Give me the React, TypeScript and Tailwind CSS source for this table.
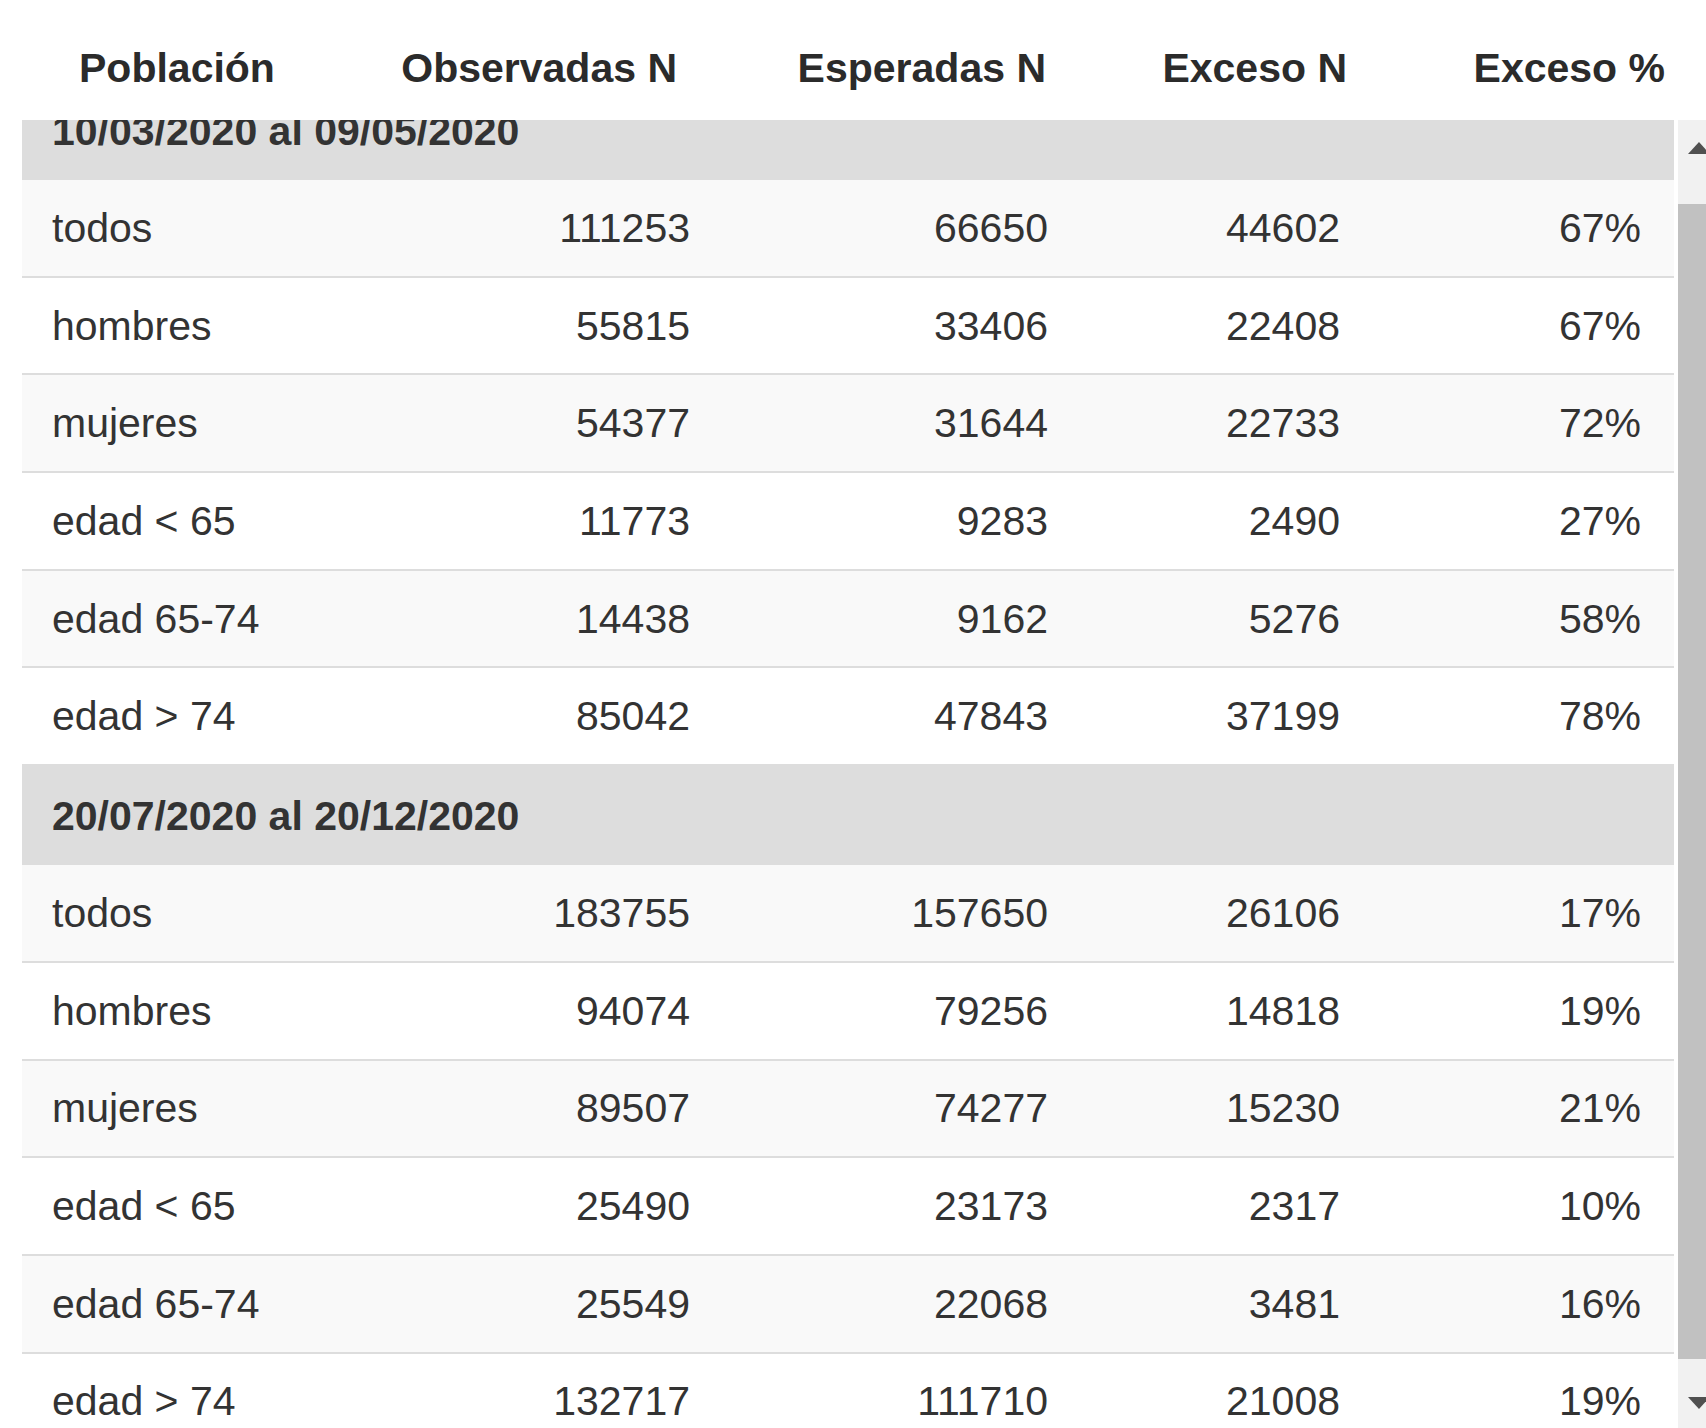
import React from "react";

type Row = [string, string, string, string, string];

const groups: { label: string; rows: Row[] }[] = [
  {
    label: "10/03/2020 al 09/05/2020",
    rows: [
      ["todos", "111253", "66650", "44602", "67%"],
      ["hombres", "55815", "33406", "22408", "67%"],
      ["mujeres", "54377", "31644", "22733", "72%"],
      ["edad < 65", "11773", "9283", "2490", "27%"],
      ["edad 65-74", "14438", "9162", "5276", "58%"],
      ["edad > 74", "85042", "47843", "37199", "78%"],
    ],
  },
  {
    label: "20/07/2020 al 20/12/2020",
    rows: [
      ["todos", "183755", "157650", "26106", "17%"],
      ["hombres", "94074", "79256", "14818", "19%"],
      ["mujeres", "89507", "74277", "15230", "21%"],
      ["edad < 65", "25490", "23173", "2317", "10%"],
      ["edad 65-74", "25549", "22068", "3481", "16%"],
      ["edad > 74", "132717", "111710", "21008", "19%"],
    ],
  },
];

export default function App() {
  return (
    <div className="h-[1428px] w-[1706px] overflow-hidden bg-white font-['Liberation_Sans',Arial,sans-serif] text-[41px] text-[#333]">
      {/* Fixed header */}
      <div className="grid h-[120px] grid-cols-[378px_309px_369px_301px_318px] pl-[22px] pt-[44px] font-bold leading-[48px] text-[#2b2b2b]">
        <div className="pl-[57px]">Población</div>
        <div className="pr-[32px] text-right">Observadas N</div>
        <div className="pr-[32px] text-right">Esperadas N</div>
        <div className="pr-[32px] text-right">Exceso N</div>
        <div className="pr-[32px] text-right">Exceso %</div>
      </div>

      {/* Scrolling body */}
      <div className="flex h-[1308px]">
        <div className="ml-[22px] w-[1652px] overflow-hidden">
          <div className="-mt-[39px]">
            {groups.map((g) => (
              <div key={g.label}>
                <div className="flex h-[99px] items-center bg-[#dddddd] pl-[30px] font-bold leading-[48px]">
                  {g.label}
                </div>
                {g.rows.map((r, i) => (
                  <div
                    key={r[0]}
                    className={
                      "grid h-[97.7px] grid-cols-[358px_342px_358px_292px_302px] items-center border-b-2 border-[#dddddd] leading-[48px] " +
                      (i % 2 === 0 ? "bg-[#f9f9f9]" : "bg-white")
                    }
                  >
                    <div className="pl-[30px]">{r[0]}</div>
                    <div className="pr-[32px] text-right">{r[1]}</div>
                    <div className="pr-[32px] text-right">{r[2]}</div>
                    <div className="pr-[32px] text-right">{r[3]}</div>
                    <div className="pr-[33px] text-right">{r[4]}</div>
                  </div>
                ))}
              </div>
            ))}
          </div>
        </div>

        {/* Scrollbar */}
        <div className="ml-[4px] flex w-[28px] flex-col overflow-hidden bg-[#f1f1f1]">
          <div className="h-[84px] pl-[10px] pt-[22px]">
            <div className="h-0 w-0 border-x-[11px] border-b-[12px] border-x-transparent border-b-[#505050]" />
          </div>
          <div className="h-[1155px] bg-[#c1c1c1]" />
          <div className="flex-1 pl-[10px] pt-[38px]">
            <div className="h-0 w-0 border-x-[11px] border-t-[12px] border-x-transparent border-t-[#505050]" />
          </div>
        </div>
      </div>
    </div>
  );
}
